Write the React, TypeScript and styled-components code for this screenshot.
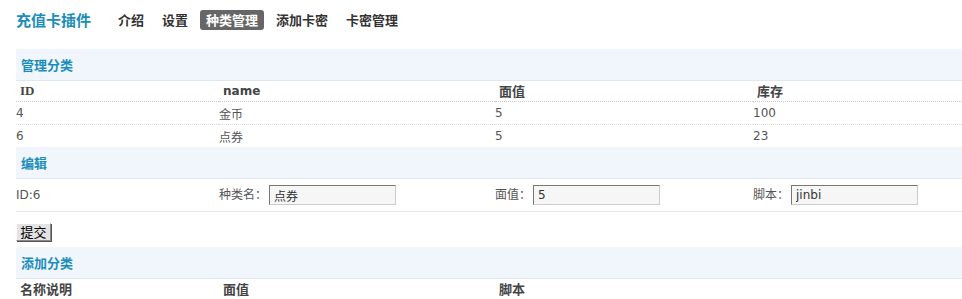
import React from "react";
import styled, { createGlobalStyle } from "styled-components";

const GlobalStyle = createGlobalStyle`
  html, body {
    margin: 0;
    padding: 0;
    background: #fff;
  }
  body {
    font-family: "DejaVu Sans", "Noto Sans CJK SC", sans-serif;
    font-size: 12px;
    color: #555;
  }
`;

const Page = styled.div`
  padding: 0 0 0 16px;
`;

const TopBar = styled.div`
  display: flex;
  align-items: center;
  padding: 10px 0 19px;
`;

const Brand = styled.div`
  font-family: "Noto Sans CJK SC", sans-serif;
  font-size: 15px;
  font-weight: bold;
  color: #1b8dbb;
  margin-right: 21px;
  line-height: 20px;
`;

const NavList = styled.div`
  display: flex;
  gap: 6px;
`;

const NavItem = styled.a<{ $active?: boolean }>`
  font-family: "Noto Sans CJK SC", sans-serif;
  font-size: 13px;
  font-weight: bold;
  line-height: 20px;
  height: 20px;
  padding: 0 6px;
  border-radius: 3px;
  color: ${(p) => (p.$active ? "#fff" : "#333")};
  background: ${(p) => (p.$active ? "#666" : "transparent")};
  text-decoration: none;
  cursor: pointer;
`;

const Grid = styled.table`
  width: 100%;
  border-collapse: collapse;
  table-layout: fixed;
`;

const SectionHead = styled.td`
  height: 31px;
  background: #f0f6fb;
  border-bottom: 1px solid #dde8f0;
  padding: 0 5px;
  font-family: "Noto Sans CJK SC", sans-serif;
  font-size: 13px;
  font-weight: bold;
  color: #1b8dbb;
  text-align: left;
`;

const ColHead = styled.th`
  height: 20px;
  padding: 0 4px;
  line-height: 16px;
  text-align: left;
  font-family: "Noto Sans CJK SC", sans-serif;
  font-size: 13px;
  font-weight: bold;
  color: #444;
  border-bottom: 1px dotted #ccc;
`;

const LatinHead = styled(ColHead)<{ $serif?: boolean }>`
  line-height: 20px;
  vertical-align: bottom;
  font-family: ${(p) =>
    p.$serif ? `"Liberation Serif", serif` : `"DejaVu Sans", sans-serif`};
  font-size: ${(p) => (p.$serif ? "13px" : "12px")};
`;

const Cell = styled.td`
  height: 22px;
  padding: 0;
  color: #555;
  border-bottom: 1px dotted #ddd;
`;

const LastCell = styled(Cell)`
  border-bottom: none;
`;

const EditCell = styled.td`
  height: 32px;
  padding: 0;
  color: #555;
  border-bottom: 1px solid #e6e6e6;
  white-space: nowrap;
`;

const Label = styled.span`
  font-family: "Noto Sans CJK SC", sans-serif;
  font-size: 12px;
  color: #555;
  margin-right: 2px;
`;

const Field = styled.input`
  width: 127px;
  height: 20px;
  box-sizing: border-box;
  border: 1px solid #ccc;
  border-top-color: #777;
  border-left-color: #777;
  background: #f6f6f6;
  padding: 0 4px;
  font-family: "DejaVu Sans", "Noto Sans CJK SC", sans-serif;
  font-size: 12px;
  color: #333;
  vertical-align: middle;
`;

const ButtonRow = styled.div`
  padding: 11px 0 6px;
`;

const SubmitButton = styled.button`
  height: 18px;
  width: 35px;
  padding: 0;
  font-family: "Noto Sans CJK SC", sans-serif;
  font-size: 13px;
  line-height: 14px;
  color: #000;
  background: #e3e3e3;
  border: 1px solid;
  border-color: #fff #888 #888 #fff;
  box-shadow: 1px 1px 0 #555;
  cursor: pointer;
`;

const Cols = () => (
  <colgroup>
    <col style={{ width: 203 }} />
    <col style={{ width: 276 }} />
    <col style={{ width: 258 }} />
    <col />
  </colgroup>
);

const items = [
  { id: 4, name: "金币", value: 5, stock: 100 },
  { id: 6, name: "点券", value: 5, stock: 23 },
];

const navs = ["介绍", "设置", "种类管理", "添加卡密", "卡密管理"];

export default function App() {
  return (
    <Page>
      <GlobalStyle />
      <TopBar>
        <Brand>充值卡插件</Brand>
        <NavList>
          {navs.map((n) => (
            <NavItem key={n} $active={n === "种类管理"}>
              {n}
            </NavItem>
          ))}
        </NavList>
      </TopBar>

      <Grid>
        <Cols />
        <tbody>
          <tr>
            <SectionHead colSpan={4}>管理分类</SectionHead>
          </tr>
          <tr>
            <LatinHead $serif>ID</LatinHead>
            <LatinHead>name</LatinHead>
            <ColHead>面值</ColHead>
            <ColHead>库存</ColHead>
          </tr>
          {items.map((it, i) => {
            const C = i === items.length - 1 ? LastCell : Cell;
            return (
              <tr key={it.id}>
                <C>{it.id}</C>
                <C>{it.name}</C>
                <C>{it.value}</C>
                <C>{it.stock}</C>
              </tr>
            );
          })}
          <tr>
            <SectionHead colSpan={4}>编辑</SectionHead>
          </tr>
          <tr>
            <EditCell>ID:6</EditCell>
            <EditCell>
              <Label>种类名：</Label>
              <Field defaultValue="点券" />
            </EditCell>
            <EditCell>
              <Label>面值：</Label>
              <Field defaultValue="5" />
            </EditCell>
            <EditCell>
              <Label>脚本：</Label>
              <Field defaultValue="jinbi" />
            </EditCell>
          </tr>
        </tbody>
      </Grid>

      <ButtonRow>
        <SubmitButton>提交</SubmitButton>
      </ButtonRow>

      <Grid>
        <Cols />
        <tbody>
          <tr>
            <SectionHead colSpan={4}>添加分类</SectionHead>
          </tr>
          <tr>
            <ColHead>名称说明</ColHead>
            <ColHead>面值</ColHead>
            <ColHead>脚本</ColHead>
            <ColHead />
          </tr>
        </tbody>
      </Grid>
    </Page>
  );
}
